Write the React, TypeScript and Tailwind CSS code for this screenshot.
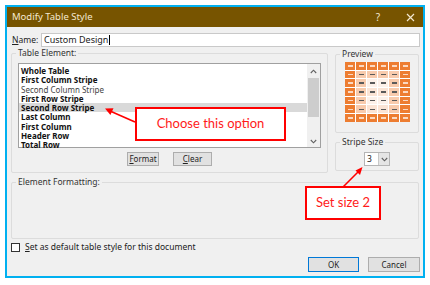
import React from "react";

const items: { label: string; bold: boolean; selected?: boolean }[] = [
  { label: "Whole Table", bold: true },
  { label: "First Column Stripe", bold: true },
  { label: "Second Column Stripe", bold: false },
  { label: "First Row Stripe", bold: true },
  { label: "Second Row Stripe", bold: true, selected: true },
  { label: "Last Column", bold: true },
  { label: "First Column", bold: true },
  { label: "Header Row", bold: true },
  { label: "Total Row", bold: true },
];

function cellClass(r: number, c: number): { bg: string; dash: string } {
  const edge = r === 0 || r === 6 || c === 0 || c === 5;
  if (edge) return { bg: "bg-[#ed7d31]", dash: "bg-[#fbd9c2]" };
  if (c === 1 || c === 4 || r === 1) return { bg: "bg-[#f8cbad]", dash: "bg-[#5a5a5a]" };
  if (r % 2 === 1) return { bg: "bg-[#fbe4d5]", dash: "bg-[#5a5a5a]" };
  return { bg: "bg-[#fdf1e9]", dash: "bg-[#5a5a5a]" };
}

function Chevron({ up }: { up?: boolean }) {
  return (
    <svg width="7" height="5" viewBox="0 0 7 5">
      <path
        d={up ? "M0.8 4 L3.5 1.2 L6.2 4" : "M0.8 1 L3.5 3.8 L6.2 1"}
        fill="none"
        stroke="#606060"
        strokeWidth="1.1"
      />
    </svg>
  );
}

function Group({
  label,
  className,
  children,
}: {
  label: string;
  className: string;
  children?: React.ReactNode;
}) {
  return (
    <div className={`relative border border-[#dcdcdc] rounded-[2px] ${className}`}>
      <span className="absolute -top-[7px] left-[4px] px-[2px] bg-[#f0f0f0] text-[8.5px] leading-[12px] text-[#333]">
        {label}
      </span>
      {children}
    </div>
  );
}

export default function App() {
  return (
    <div className="relative w-[430px] h-[285px] bg-white pt-[5px] pl-[5px] font-['Noto_Sans',sans-serif] overflow-hidden">
      <div className="w-[420px] h-[273px] border-2 border-[#00b0f0] flex flex-col">
        {/* title bar */}
        <div className="h-[20px] bg-[#775400] flex items-center pl-[5px] pr-[8px] text-[#f3e8d0]">
          <span className="text-[9.5px]">Modify Table Style</span>
          <span className="ml-auto text-[10px] mr-[26px]">?</span>
          <svg width="9" height="9" viewBox="0 0 9 9">
            <path d="M1 1 L8 8 M8 1 L1 8" stroke="#f3e8d0" strokeWidth="1.2" />
          </svg>
        </div>
        {/* body */}
        <div className="flex-1 bg-[#f0f0f0] flex flex-col pl-[4px] pr-[4px] text-[#222]">
          {/* name row */}
          <div className="mt-[6px] h-[14px] flex items-center">
            <span className="ml-[1px] w-[29px] text-[8.5px]">
              <span className="underline">N</span>ame:
            </span>
            <div className="flex-1 -mr-[1px] h-[14px] bg-white border border-[#c9c9c9] flex items-center pl-[2px] text-[9px] text-[#222]">
              Custom Design<span className="inline-block w-px h-[10px] bg-black ml-px" />
            </div>
          </div>
          {/* main row */}
          <div className="mt-[6px] flex">
            <Group label="Table Element:" className="w-[317px] h-[120px] flex flex-col">
              <span className="hidden" />
              <div className="mt-[9px] mx-[6px] h-[85px] bg-white border border-[#a0a0a0] flex">
                <div className="flex-1 pt-[2px]">
                  {items.map((it) => (
                    <div
                      key={it.label}
                      className={`h-[9.25px] leading-[9.25px] pl-[2px] text-[8px] ${
                        it.bold ? "font-bold text-[#111]" : "text-[#444]"
                      } ${it.selected ? "bg-[#d9d9d9]" : ""}`}
                    >
                      {it.label}
                    </div>
                  ))}
                </div>
                <div className="w-[13px] flex flex-col items-center bg-[#f0f0f0]">
                  <div className="h-[14px] flex items-center">
                    <Chevron up />
                  </div>
                  <div className="w-[11px] h-[39px] bg-[#cdcdcd]" />
                  <div className="flex-1" />
                  <div className="h-[12px] flex items-center">
                    <Chevron />
                  </div>
                </div>
              </div>
              <div className="mt-[4px] flex justify-center gap-[14px]">
                <div className="w-[32px] h-[14px] bg-[#e1e1e1] border border-[#adadad] flex items-center justify-center text-[8px]">
                  <span className="underline">F</span>ormat
                </div>
                <div className="w-[39px] h-[14px] bg-[#e1e1e1] border border-[#adadad] flex items-center justify-center text-[8px]">
                  <span className="underline">C</span>lear
                </div>
              </div>
            </Group>
            <div className="ml-[7px] w-[84px] flex flex-col">
              <Group label="Preview" className="mt-[1px] h-[79px]">
                <div className="mt-[7px] ml-[9px] w-[65px] grid grid-cols-[repeat(6,10px)] grid-rows-[repeat(7,7.7px)] gap-px bg-white">
                  {Array.from({ length: 42 }).map((_, i) => {
                    const r = Math.floor(i / 6);
                    const c = i % 6;
                    const cl = cellClass(r, c);
                    return (
                      <div key={i} className={`${cl.bg} flex items-center justify-center`}>
                        <div className={`w-[5px] h-[1.5px] ${cl.dash}`} />
                      </div>
                    );
                  })}
                </div>
              </Group>
              <Group label="Stripe Size" className="mt-[9px] h-[29px]">
                <div className="mt-[9px] ml-[28px] w-[26px] h-[14px] border border-[#b5b5b5] flex">
                  <div className="w-[13px] bg-white text-[8.5px] leading-[12px] pl-[2px] text-[#222]">3</div>
                  <div className="flex-1 bg-[#e5e5e5] border-l border-[#c8c8c8] flex items-center justify-center">
                    <Chevron />
                  </div>
                </div>
              </Group>
            </div>
          </div>
          {/* element formatting */}
          <Group label="Element Formatting:" className="mt-[9px] h-[57px]" />
          {/* checkbox */}
          <div className="mt-[4px] h-[9px] flex items-center">
            <div className="w-[9px] h-[9px] border border-[#333] bg-white" />
            <span className="ml-[5px] text-[8.5px] text-[#222]">
              <span className="underline">S</span>et as default table style for this document
            </span>
          </div>
          {/* buttons */}
          <div className="mt-[5px] flex justify-end -mr-[1px]">
            <div className="w-[51px] h-[15px] bg-[#e1e1e1] border-[1.5px] border-[#0078d7] flex items-center justify-center text-[8px]">
              OK
            </div>
            <div className="ml-[9px] w-[52px] h-[15px] bg-[#e1e1e1] border border-[#adadad] flex items-center justify-center text-[8px]">
              Cancel
            </div>
          </div>
        </div>
      </div>

      {/* callouts (overlays) */}
      <div className="absolute left-[135px] top-[107px] w-[151px] h-[34px] bg-white border-2 border-[#ff0000] flex items-center justify-center font-['Lato',sans-serif] text-[13px] text-[#ff1a1a]">
        Choose this option
      </div>
      <div className="absolute left-[305px] top-[186px] w-[76px] h-[34px] bg-white border-2 border-[#ff0000] flex items-center justify-center font-['Lato',sans-serif] text-[13px] text-[#ff1a1a]">
        Set size 2
      </div>
      <svg className="absolute left-0 top-0 pointer-events-none" width="430" height="285" viewBox="0 0 430 285">
        <line x1="135" y1="122" x2="110" y2="111" stroke="#ff0000" strokeWidth="1.6" />
        <polygon points="105,108.5 113.5,108.2 110.4,114.9" fill="#ff0000" />
        <line x1="343" y1="187" x2="359" y2="171" stroke="#ff0000" strokeWidth="1.6" />
        <polygon points="362.5,167 355.5,170.5 360,175" fill="#ff0000" />
      </svg>
    </div>
  );
}
